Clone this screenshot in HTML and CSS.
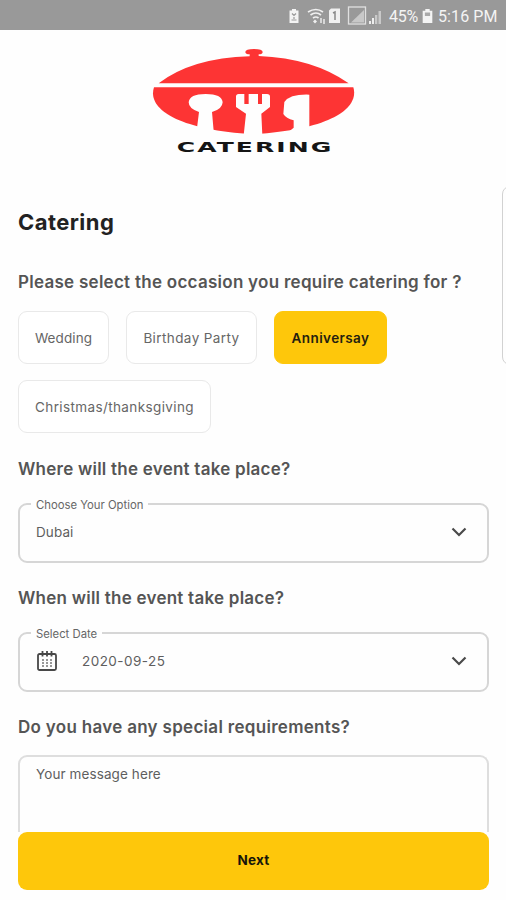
FILE: index.html
```html
<!DOCTYPE html>
<html lang="en">
<head>
<meta charset="utf-8">
<meta name="viewport" content="width=device-width, initial-scale=1">
<title>Catering</title>
<link rel="stylesheet" href="styles.css">
</head>
<body>
<div class="screen">
  <header class="status">
    <svg class="status-icons" viewBox="0 0 100 24" width="100" height="24">
      <path fill="#f4f4f4" d="M3 6.500h2V5h4v1.500h2.500V19H2.500V6.500z"/>
      <path fill="none" stroke="#999" stroke-width="1.2" d="M5 9.500l2 2 2-2M4.500 16h5M7 13v2"/>
      <g fill="none" stroke="#f0f0f0" stroke-width="1.7">
        <path d="M21 8q8-5 15 0M23.500 11q5.500-4 10.500 0M26 14q3-2 5.500 0"/>
        <path d="M34 14v5M37 20v-5" stroke-width="1.400"/>
      </g>
      <path fill="#f0f0f0" d="M28 15.500l2 2-2 2-2-2zM44 4.500h9V19H42V6.500z"/>
      <path fill="none" stroke="#888" stroke-width="1.500" d="M46 9l2-1v8"/>
      <rect x="61.500" y="3" width="17" height="17" fill="none" stroke="#e0e0e0" stroke-width="1.300"/>
      <path fill="#c8c8c8" d="M64 18.500L77 6v12.500z"/>
      <path fill="#eee" d="M82 17h2v3h-2zM85 14h2v6h-2z"/>
      <path fill="#c9c9c9" d="M88 11h2.300v9H88zM91.500 7H94v13h-2.500z"/>
    </svg>
    <span class="level">45%</span>
    <svg class="battery" viewBox="0 0 11 16" width="11" height="14"><path fill="#f4f4f4" d="M0 2h3V0h5v2h3v14H0z"/><path fill="#aaa" d="M2.500 4h6v4h-6z"/></svg>
    <span class="clock">5:16 PM</span>
  </header>
  <main class="page">
    <svg class="logo" viewBox="0 0 690 375" width="230" height="125">
      <g fill="#fd3434">
        <path d="M316 36q0-9 26-9t26 9q0 7-12 7v5q165 7 270 82H56Q155 54 329 49v-6q-13 0-13-7z"/>
        <path d="M42 142h598c18 60-60 126-300 141C100 268 22 202 42 142z"/>
      </g>
      <g fill="#fefefe">
        <path d="M171 264L177 216Q146 206 146 187Q148 162 197 162T248 187Q247 208 216 216L222 285H171z"/>
        <path d="M288 170q0-8 8-8h17v30h13v-30h28v30h12v-30h15q9 0 9 8v31L364 221L367 286H311L318 221L288 201z"/>
        <path d="M508 266V164q-58-2-75 22l-3 36q8 13 31 19v22l-12 10v14h59z"/>
      </g>
      <text class="logo-word" transform="scale(1.75 1)" x="63" y="335" textLength="265" lengthAdjust="spacing">CATERING</text>
    </svg>
    <h1 class="title">Catering</h1>
    <h2 class="question q-occasion">Please select the occasion you require catering for ?</h2>
    <div class="chips">
      <button class="chip wedding">Wedding</button>
      <button class="chip birthday">Birthday Party</button>
      <button class="chip anniversary active">Anniversay</button>
      <button class="chip christmas">Christmas/thanksgiving</button>
    </div>
    <h2 class="question q-where">Where will the event take place?</h2>
    <div class="field">
      <span class="legend l-option">Choose Your Option</span>
      <span class="value v-city">Dubai</span>
      <svg class="chevron" viewBox="0 0 16 10" width="16" height="10"><path d="M1.500 1.500L8 8l6.500-6.500"/></svg>
    </div>
    <h2 class="question q-when">When will the event take place?</h2>
    <div class="field">
      <span class="legend l-date">Select Date</span>
      <svg class="calendar" viewBox="0 0 20 20" width="20" height="20">
        <rect x="1" y="3" width="18" height="16" rx="1.500"/>
        <path d="M5.500 0v5.500M10 0v5.500M14.500 0v5.500"/>
        <path class="days" d="M6 8v8M10 8v8M14 8v8"/>
      </svg>
      <span class="value v-date">2020-09-25</span>
      <svg class="chevron" viewBox="0 0 16 10" width="16" height="10"><path d="M1.500 1.500L8 8l6.500-6.500"/></svg>
    </div>
    <h2 class="question q-special">Do you have any special requirements?</h2>
    <div class="message"><span class="v-message">Your message here</span></div>
    <button class="next">Next</button>
  </main>
  <div class="next-card"></div>
</div>
</body>
</html>
```
FILE: styles.css
```css
* { box-sizing: border-box; }
body { margin: 0; background: #fff; font-family: Inter, Roboto, "Liberation Sans", sans-serif; }
.screen { position: relative; width: 506px; height: 900px; overflow: hidden; background: #fefefe; display: flex; flex-direction: column; }
.status { height: 30px; flex: none; background: #999; color: #f4f4f4; display: flex; align-items: center; justify-content: flex-end; padding: 2px 9px 0 0; font-family: Roboto, sans-serif; font-size: 16px; }
.status-icons { margin-right: 2px; }
.level { width: 32px; letter-spacing: -0.2px; }
.battery { margin: 0 5px 0 1px; }
.clock { width: 59px; white-space: nowrap; letter-spacing: 0.1px; }
.page { flex: 1; display: flex; flex-direction: column; align-items: stretch; padding: 10px 17px 10px 18px; }
.logo { margin-left: 122px; flex: none; }
.logo-word { font-family: "DejaVu Sans", sans-serif; font-weight: 700; font-size: 43px; fill: #151515; }
.title { margin: 43px 0 0; height: 28px; line-height: 28px; font-size: 22px; font-weight: 700; color: #222; letter-spacing: 0.45px; }
.question { margin: 0; flex: none; height: 24px; line-height: 24px; font-size: 17px; font-weight: 600; color: #555; white-space: nowrap; letter-spacing: 0.24px; }
.q-occasion { margin-top: 34px; letter-spacing: 0.27px; }
.chips { display: flex; flex-wrap: wrap; gap: 16px 17px; margin-top: 17px; flex: none; }
.chip { height: 53px; padding: 0; border: 1px solid #e9e9e9; border-radius: 9px; background: #fff; font: 400 13.5px Inter, sans-serif; color: #666; white-space: nowrap; letter-spacing: 0.1px; }
.wedding { width: 91px; }
.birthday { width: 131px; letter-spacing: 0.4px; }
.anniversary { width: 113px; }
.christmas { width: 193px; letter-spacing: 0.38px; }
.chip.active { background: #fec70b; border-color: #fec70b; color: #24200f; font-weight: 600; letter-spacing: 0.4px; }
.q-where { margin-top: 24px; }
.field { position: relative; flex: none; height: 60px; margin-top: 22px; border: 2px solid #d6d6d6; border-radius: 9px; display: flex; align-items: center; padding: 0 20px 2px 16px; }
.legend { position: absolute; top: -7px; left: 11px; padding: 0 5px; line-height: 15px; background: #fefefe; font-size: 11.3px; color: #666; white-space: nowrap; }
.value, .v-message { font-size: 13.5px; color: #5e5e5e; letter-spacing: 0.1px; white-space: nowrap; }
.chevron { margin-left: auto; fill: none; stroke: #4a4a4a; stroke-width: 2.2; }
.calendar { fill: none; stroke: #484848; stroke-width: 1.8; margin-left: 1px; }
.calendar .days { stroke: #777; stroke-width: 1.5; stroke-dasharray: 2 1; }
.v-date { margin-left: 25px; letter-spacing: 0.45px; }
.q-when { margin-top: 23px; }
.q-special { margin-top: 23px; letter-spacing: 0.3px; }
.message { flex: none; height: 77px; margin-top: 16px; border: 2px solid #dedede; border-bottom: 0; border-radius: 9px 9px 0 0; padding: 6px 16px; line-height: 20px; }
.next { flex: none; height: 58px; border: 0; border-radius: 9px; background: #fec70b; color: #16140a; font: 700 13.5px Inter, sans-serif; padding: 0 0 2px; letter-spacing: 0.2px; }
.next-card { position: absolute; top: 186px; left: 502px; width: 40px; height: 179px; border: 1px solid #d2d2d2; border-radius: 8px; }
```
